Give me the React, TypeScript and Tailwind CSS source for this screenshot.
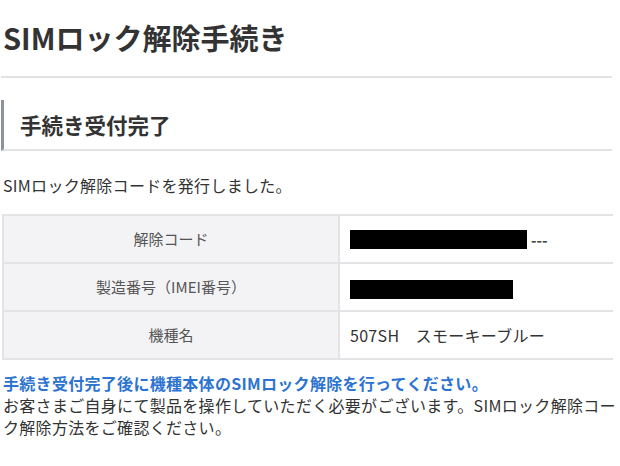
export default function App() {
  const rows = [
    { label: "解除コード", value: "code" },
    { label: "製造番号（IMEI番号）", value: "imei" },
    { label: "機種名", value: "507SH　スモーキーブルー" },
  ];

  return (
    <div
      className="w-[620px] h-[466px] overflow-hidden bg-white text-[#333]"
      style={{ fontFamily: '"Noto Sans CJK JP", "Noto Sans", sans-serif' }}
    >
      <div className="w-[612px] pl-[1px]">
        {/* タイトル */}
        <h1 className="pt-[18px] pb-[20px] pl-[2px] text-[29px] leading-[38px] font-bold text-[#333]">
          SIMロック解除手続き
        </h1>
        <div className="h-[2px] bg-[#e2e2e2]" />

        {/* 見出し */}
        <div className="mt-[22px] border-l-[3px] border-[#8c919a] border-b-2 border-b-[#e2e2e2] h-[51px] flex items-center pl-[16px]">
          <h2 className="text-[21.5px] font-bold leading-none text-[#333]">手続き受付完了</h2>
        </div>

        <p className="mt-[23px] pl-[2px] text-[16px] leading-[22px] tracking-[0.3px] text-[#333]">
          SIMロック解除コードを発行しました。
        </p>

        {/* テーブル */}
        <table className="mt-[18px] ml-[1px] w-[611px] border-collapse">
          <tbody>
            {rows.map((r) => (
              <tr key={r.label} className="h-[48px]">
                <td className="w-[336px] bg-[#f3f3f5] border-2 border-[#e4e4e6] text-center text-[15px] text-[#555]">
                  {r.label}
                </td>
                <td className="border-y-2 border-[#e4e4e6] pl-[10px]">
                  {r.value === "code" ? (
                    <div className="flex items-center gap-[4px]">
                      <div className="w-[177px] h-[19px] bg-black" />
                      <span className="text-[15px] font-bold text-[#444] leading-none">---</span>
                    </div>
                  ) : r.value === "imei" ? (
                    <div className="w-[163px] h-[19px] bg-black mt-[4px]" />
                  ) : (
                    <span className="text-[16px] tracking-[0.3px] text-[#333]">{r.value}</span>
                  )}
                </td>
              </tr>
            ))}
          </tbody>
        </table>

        {/* 注意書き */}
        <div className="mt-[12px] pl-[2px] text-[16px] leading-[22px] tracking-[0.3px] whitespace-nowrap">
          <p className="font-bold text-[#2d74d0]">
            手続き受付完了後に機種本体のSIMロック解除を行ってください。
          </p>
          <p className="text-[#333]">
            お客さまご自身にて製品を操作していただく必要がございます。SIMロック解除コー
          </p>
          <p className="text-[#333]">ク解除方法をご確認ください。</p>
        </div>
      </div>
    </div>
  );
}
